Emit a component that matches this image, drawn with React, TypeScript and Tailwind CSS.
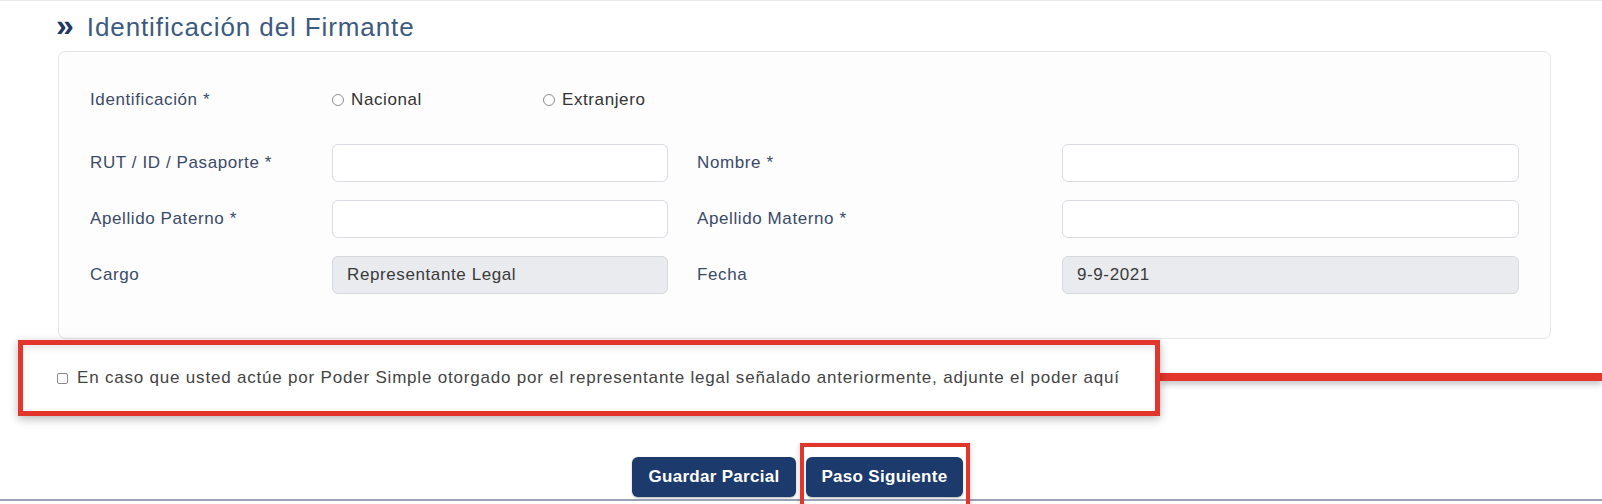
import React from "react";

type Field = {
  label: string;
  value?: string;
  disabled?: boolean;
};

const rows: [Field, Field][] = [
  [{ label: "RUT / ID / Pasaporte *" }, { label: "Nombre *" }],
  [{ label: "Apellido Paterno *" }, { label: "Apellido Materno *" }],
  [
    { label: "Cargo", value: "Representante Legal", disabled: true },
    { label: "Fecha", value: "9-9-2021", disabled: true },
  ],
];

const Input = ({ field }: { field: Field }) => (
  <div
    className={`h-[38px] rounded-[6px] border flex items-center px-[14px] text-[#3a3a3a] ${
      field.disabled ? "bg-[#e9ebee] border-[#d5d9df]" : "bg-white border-[#d9dde3]"
    }`}
  >
    {field.value}
  </div>
);

const Radio = ({ label }: { label: string }) => (
  <label className="flex items-center gap-[7px] text-[#333]">
    <span className="w-[12px] h-[12px] rounded-full border border-[#8d8d8d] bg-white"></span>
    {label}
  </label>
);

export default function App() {
  return (
    <div
      className="w-[1602px] h-[504px] overflow-hidden bg-white text-[17px] tracking-[0.6px]"
      style={{ fontFamily: '"Liberation Sans", Arial, sans-serif' }}
    >
      <div className="h-px bg-[#e6eaf0]"></div>

      {/* title */}
      <div className="mt-[11px] h-[30px] pl-[56px] flex items-center gap-[15px]">
        <span className="text-[32px] leading-none font-bold text-[#1d3766] tracking-[-2px] -mt-[4px]">
          »
        </span>
        <h2 className="text-[26px] leading-[30px] text-[#3d5a80] tracking-[0.9px]">
          Identificación del Firmante
        </h2>
      </div>

      {/* card */}
      <div className="mt-[9px] ml-[58px] w-[1493px] h-[288px] border border-[#e3e5e8] rounded-[7px] bg-[#fdfdfd] px-[31px] pt-[36px]">
        <div className="h-[24px] flex items-center">
          <span className="w-[242px] text-[#3b4a68]">Identificación *</span>
          <div className="w-[211px]">
            <Radio label="Nacional" />
          </div>
          <Radio label="Extranjero" />
        </div>

        <div className="mt-[32px] grid grid-cols-[242px_336px_394px_457px] gap-y-[18px] items-center">
          {rows.map((row, i) => (
            <React.Fragment key={i}>
              <span className="text-[#3b4a68]">{row[0].label}</span>
              <Input field={row[0]} />
              <span className="pl-[29px] text-[#3b4a68]">{row[1].label}</span>
              <Input field={row[1]} />
            </React.Fragment>
          ))}
        </div>
      </div>

      {/* highlighted checkbox */}
      <div className="mt-[1px] flex items-center">
        <div className="ml-[18px] w-[1142px] h-[76px] border-[5px] border-[#e2352b] bg-white shadow-[0_3px_9px_rgba(0,0,0,0.28),inset_0_6px_8px_-4px_rgba(0,0,0,0.12)] flex items-center pl-[34px] gap-[9px] text-[#444] tracking-[0.8px] relative z-10">
          <span className="w-[11px] h-[11px] border border-[#8a8a8a] rounded-[2px] bg-white"></span>
          En caso que usted actúe por Poder Simple otorgado por el representante legal señalado anteriormente, adjunte el poder aquí
        </div>
        <div className="flex-1 h-[8px] -mt-[2px] bg-[#e2352b] shadow-[0_3px_6px_rgba(0,0,0,0.25)]"></div>
      </div>

      {/* buttons */}
      <div className="mt-[27px] h-[56px] flex justify-center items-start gap-[4px] relative z-10">
        <button className="mt-[14px] w-[164px] h-[40px] rounded-[6px] bg-[#1c3a6b] text-white font-bold tracking-[0.3px] shadow-[0_1px_2px_rgba(0,0,0,0.3)]">
          Guardar Parcial
        </button>
        <div className="w-[170px] h-[80px] border-[4px] border-[#e2352b] pt-[10px] pl-[2px] shadow-[0_2px_6px_rgba(0,0,0,0.2)]">
          <button className="w-[157px] h-[40px] rounded-[6px] bg-[#1c3a6b] text-white font-bold tracking-[0.3px] shadow-[0_1px_2px_rgba(0,0,0,0.3)]">
            Paso Siguiente
          </button>
        </div>
      </div>
      <div className="h-[2px] bg-[#9aa2b6]"></div>
    </div>
  );
}
